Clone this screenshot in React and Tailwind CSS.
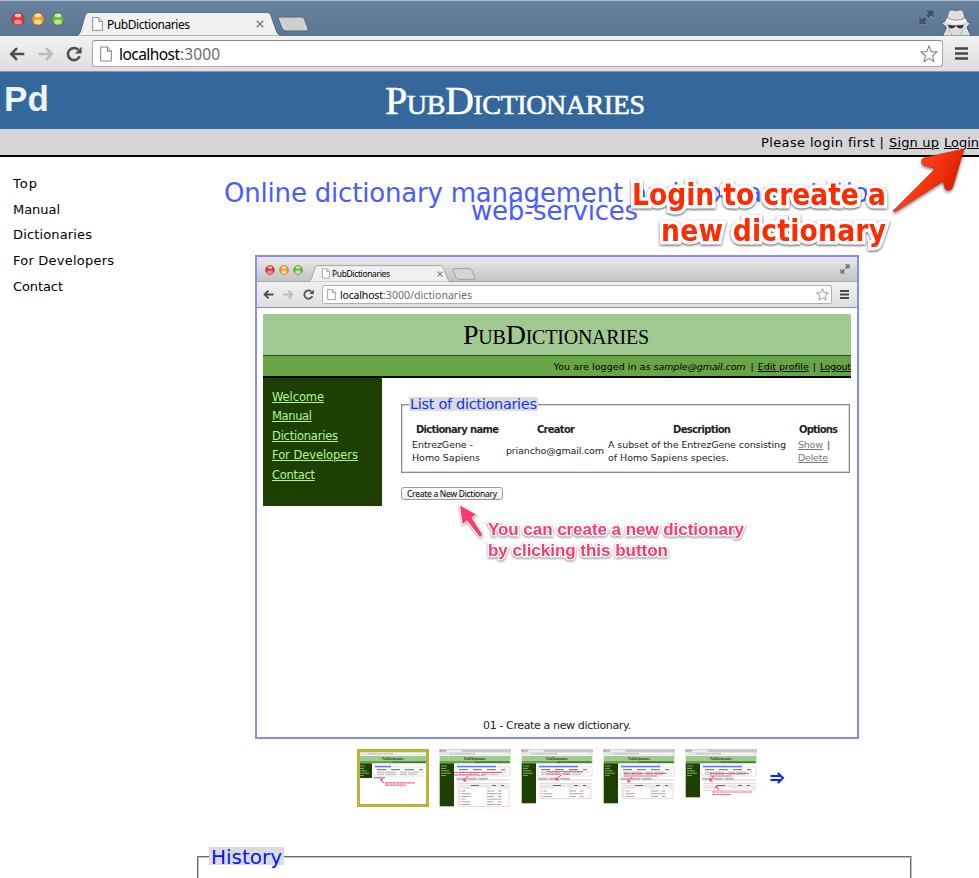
import { useLayoutEffect, useRef } from "react";

/* A single line of text tracked so that it fills exactly `w` pixels. */
function Fit({ w, className = "", children }) {
  const ref = useRef(null);
  useLayoutEffect(() => {
    const el = ref.current;
    el.style.width = "max-content";
    el.style.letterSpacing = "0px";
    const natural = el.getBoundingClientRect().width;
    const n = Math.max(1, String(children).length - 1);
    el.style.letterSpacing = (w - natural) / n + "px";
    el.style.width = w + "px";
  }, [w, children]);
  return (
    <span ref={ref} className={"inline-block whitespace-nowrap text-left " + className}>
      {children}
    </span>
  );
}

function Lights({ size, className }) {
  return (
    <div className={"flex " + className}>
      {[
        ["r", "#dc3a36", "#ff9d94", "#8e2a2a"],
        ["y", "#e8a12c", "#ffe49a", "#94661f"],
        ["g", "#6fb544", "#cdf5a5", "#437a2d"],
      ].map(([id, base, hi, edge]) => (
        <svg key={id} width={size} height={size} viewBox="0 0 13 13">
          <circle cx="6.5" cy="6.5" r="5.7" fill={base} stroke={edge} strokeWidth="0.7" />
          <ellipse cx="6.5" cy="9.3" rx="3.6" ry="2.4" fill={hi} opacity="0.8" />
          <ellipse cx="6.5" cy="3.2" rx="3" ry="1.7" fill="#fff" opacity="0.7" />
        </svg>
      ))}
    </div>
  );
}

const Doc = ({ w, h }) => (
  <svg width={w} height={h} viewBox="0 0 11 14" className="shrink-0">
    <path d="M.6.6H6.8L10.4 4.4V13.4H.6Z" fill="#fff" stroke="#8b8b8b" />
    <path d="M6.8.6V4.4H10.4" fill="#e8e8e8" stroke="#8b8b8b" />
  </svg>
);

const Arrow = ({ w, color, flip }) => (
  <svg width={w} height={w} viewBox="0 0 16 16" className={flip ? "-scale-x-100 shrink-0" : "shrink-0"}>
    <path d="M8 2.2 2.2 8 8 13.8M2.5 8H15.3" fill="none" stroke={color} strokeWidth="2.6" />
  </svg>
);

const Reload = ({ w }) => (
  <svg width={w} height={w} viewBox="0 0 16 16" className="shrink-0">
    <path d="M13.6 10.2A6 6 0 1 1 12.2 3.8" fill="none" stroke="#505050" strokeWidth="2.6" />
    <path d="M15.6.8V7.4H9Z" fill="#505050" />
  </svg>
);

const Star = ({ w }) => (
  <svg width={w} height={w} viewBox="0 0 18 18" className="shrink-0">
    <path d="M9 .9 11.2 6.6 17.2 6.9 12.5 10.7 14.1 16.8 9 13.4 3.9 16.8 5.5 10.7.8 6.9 6.8 6.6Z" fill="#fff" stroke="#858585" strokeWidth="1.1" strokeLinejoin="round" />
  </svg>
);

const Menu = ({ w, h }) => (
  <svg width={w} height={h} viewBox="0 0 13 13" preserveAspectRatio="none" className="shrink-0">
    <path d="M0 1.5H13M0 6.5H13M0 11.5H13" stroke="#474747" strokeWidth="2.7" />
  </svg>
);

const Cross = ({ w, className = "" }) => (
  <svg width={w} height={w} viewBox="0 0 8 8" className={className}>
    <path d="M.8.8 7.2 7.2M7.2.8.8 7.2" stroke="#808080" strokeWidth="1.5" />
  </svg>
);

const Expand = ({ w, color }) => (
  <svg width={w} height={w} viewBox="0 0 15 15" className="shrink-0">
    <path d="M7 .5H14.5V8L12 5.5 9.8 7.7 7.4 5.3 9.5 3Z" fill={color} />
    <path d="M8 14.5H.5V7L3 9.5 5.2 7.3 7.6 9.7 5.5 12Z" fill={color} />
    <path d="M8 15H.5M14.5 8.5 12 6" stroke="#fff" strokeWidth="0.6" opacity="0.6" />
  </svg>
);

const Incognito = () => (
  <svg width="32" height="27" viewBox="0 0 32 27">
    <path d="M7.5 7.5C8 3 9 1 11 .9 13 .7 14 1.6 16 1.5 18 1.4 19.5.5 21.5.9 23.5 1.4 24.3 5 24.7 8.5L27.5 13 30.6 13.8 27 18.2 31 27H2.6L6.5 18.4.8 13.6 5 12.6Z" fill="#dedede" stroke="#4b5868" strokeWidth="0.9" />
    <path d="M7.4 8.5C12 12.5 20 12.5 24.8 8.7L27.2 12.6C20 16.5 12 16 5.2 12.6Z" fill="#f4f4f4" />
    <path d="M8 8.2C12 11.6 20 11.8 24.3 8.4L24.6 9.3C20 12.3 12 12.1 7.6 9.1Z" fill="#666" />
    <path d="M7.5 15.5C11 16.8 20 16.9 24 15.6L22.300 19C19.5 20 17.5 19 16.7 17.5H15C14.3 19.300 11.500 20 9.200 18.800Z" fill="#333" />
    <path d="M8.500 19.500 12.500 26.500M23.500 19.500 20 26.500" stroke="#b0b0b0" fill="none" />
  </svg>
);

function MainChrome() {
  return (
    <header className="font-['Noto_Sans',sans-serif]">
      <div className="flex h-[36px] border-t border-[#a9bccd] bg-gradient-to-b from-[#67839f] to-[#5c7592]">
        <Lights size={14} className="gap-[6px] pt-[11px] pl-[11px]" />
        <div className="relative ml-[11px] flex h-[35px] w-[204px]">
          <svg className="absolute top-[10px] left-0" width="206" height="25" viewBox="0 0 206 25">
            <path d="M0 25C3 24 4 22 5 19L9 5C10 2 11 1.5 14 1.5H190C193 1.5 194 2 195 5L200 19C201 22 202 24 206 25Z" fill="#f0f0f0" stroke="#475c72" strokeWidth="0.8" />
          </svg>
          <div className="relative flex flex-1 items-start pt-[16px] pl-[16px]">
            <Doc w={11} h={14} />
            <Fit w={83} className="-mt-px ml-[4px] text-[12px] leading-[17px] text-black">PubDictionaries</Fit>
            <Cross w={8} className="mt-[3px] ml-[66px]" />
          </div>
        </div>
        <svg className="mt-[15px] -ml-[3px]" width="32" height="16" viewBox="0 0 32 16">
          <path d="M3.5 1H24C26 1 27 2 27.8 4L30.8 12C31.3 14 31 15 29 15H9.5C7.5 15 6 14 5 12L1.5 3.5C1 2 1.5 1 3.5 1Z" fill="#d0d0d0" stroke="#50667d" />
        </svg>
        <div className="ml-auto flex pr-[7px]">
          <div className="pt-[9px] pr-[6px]"><Expand w={15} color="#3f526a" /></div>
          <div className="pt-[8px]"><Incognito /></div>
        </div>
      </div>
      <div className="flex h-[36px] items-center border-b border-[#8b959c] bg-gradient-to-b from-[#f2f2f2] to-[#dedede]">
        <div className="ml-[9px]"><Arrow w={16} color="#4d4d4d" /></div>
        <div className="ml-[13px]"><Arrow w={16} color="#b9b9b9" flip /></div>
        <div className="ml-[12px]"><Reload w={16} /></div>
        <div className="ml-[10px] flex h-[27px] w-[851px] items-center rounded-[3px] border border-[#a8a8a8] border-t-[#8b8b8b] bg-white pr-[4px] pl-[7px]">
          <Doc w={12} h={16} />
          <Fit w={61} className="ml-[7px] text-[15.5px] leading-[20px] text-black">localhost</Fit>
          <Fit w={40} className="text-[15.5px] leading-[20px] text-[#6b6b6b]">:3000</Fit>
          <div className="ml-auto"><Star w={18} /></div>
        </div>
        <div className="ml-[12px]"><Menu w={13} h={13} /></div>
      </div>
    </header>
  );
}

function InnerChrome() {
  return (
    <div className="font-['Noto_Sans',sans-serif]">
      <div className="flex h-[25px] border-b border-[#a5a5a5] bg-gradient-to-b from-[#e9e9e9] to-[#c4c4c4]">
        <Lights size={10} className="gap-[4px] pt-[8px] pl-[8px]" />
        <div className="relative ml-[5px] flex w-[143px]">
          <svg className="absolute top-[8px] left-0" width="144" height="17" viewBox="0 0 144 17">
            <path d="M0 17C2 16.5 3 15 4 12L7 3C7.7 1 8.5.6 10 .6H132C134 .6 134.5 1 135.3 3L139 12C140 15 141 16.500 144 17Z" fill="#f0f0f0" stroke="#999" strokeWidth="0.8" />
          </svg>
          <div className="relative flex items-start pt-[11px] pl-[14px]">
            <Doc w={8} h={11} />
            <Fit w={58} className="ml-[2px] text-[8.5px] leading-[12px] text-black">PubDictionaries</Fit>
            <Cross w={6} className="mt-[3px] ml-[47px]" />
          </div>
        </div>
        <svg className="mt-[11px] ml-px" width="24" height="12" viewBox="0 0 24 12">
          <path d="M2.500.6H17C19 .6 19.500 1.500 20 2.500L22.500 9C23 10.500 22.500 11.300 21 11.300H7C5.500 11.300 4.500 10.500 4 9.500L1 2.500C.5 1.200 1.200.6 2.500.6Z" fill="#d6d6d6" stroke="#9b9b9b" strokeWidth="0.9" />
        </svg>
        <div className="ml-auto pt-[7px] pr-[7px]"><Expand w={10} color="#777" /></div>
      </div>
      <div className="flex h-[26px] items-center border-b border-[#8f8f8f] bg-gradient-to-b from-[#f1f1f1] to-[#dfdfdf]">
        <div className="ml-[6px]"><Arrow w={11} color="#4d4d4d" /></div>
        <div className="ml-[9px]"><Arrow w={11} color="#b9b9b9" flip /></div>
        <div className="ml-[9px]"><Reload w={11} /></div>
        <div className="ml-[8px] flex h-[19px] w-[510px] items-center rounded-[2px] border border-[#b0b0b0] bg-white pr-[2px] pl-[4px]">
          <Doc w={9} h={11} />
          <Fit w={43} className="ml-[4px] text-[10.5px] leading-[14px] text-black">localhost</Fit>
          <Fit w={89} className="text-[10.5px] leading-[14px] text-[#6b6b6b]">:3000/dictionaries</Fit>
          <div className="ml-auto"><Star w={13} /></div>
        </div>
        <div className="ml-[8px]"><Menu w={9} h={9} /></div>
      </div>
    </div>
  );
}

function InnerPage() {
  const nav = [["Welcome", 52], ["Manual", 40], ["Dictionaries", 66], ["For Developers", 86], ["Contact", 43]];
  return (
    <div className="mt-[6px] ml-[6px] w-[588px] text-[9.5px] text-[#222]">
      <div className="h-[42px] border-b border-[#2d4a1e] bg-[#a1ca92] pl-[200px] font-['Liberation_Serif',serif] text-[28px] leading-[42px] text-black [font-variant-caps:small-caps]">
        <Fit w={186}>PubDictionaries</Fit>
      </div>
      <div className="flex h-[22px] justify-end border-b-2 border-black bg-[#67a546] leading-[21px] text-black">
        <Fit w={97}>You are logged in as</Fit>
        <Fit w={92} className="ml-[3px] italic">sample@gmail.com</Fit>
        <span className="ml-[5px]">|</span>
        <Fit w={51} className="ml-[4px] underline">Edit profile</Fit>
        <span className="ml-[4px]">|</span>
        <Fit w={31} className="ml-[4px] underline">Logout</Fit>
      </div>
      <div className="flex">
        <nav className="flex h-[128px] w-[119px] flex-col bg-[#1d4002] pt-[10px] pl-[9px] text-[11.5px] text-[#b4f598]">
          {nav.map(([t, w]) => (
            <Fit key={t} w={w} className="h-[19.4px] leading-[19.4px] underline">{t}</Fit>
          ))}
        </nav>
        <div className="pt-[19px] pl-[19px]">
          <fieldset className="h-[76px] w-[449px] border-[1.5px] border-[#8b8b8b] shadow-[inset_0_0_0_0.5px_#b5b5b5]">
            <legend className="ml-[7px] h-[14px] bg-[#dcdcdc] px-px text-[14.5px] leading-[14px] text-[#0a35ff]">
              <Fit w={127}>List of dictionaries</Fit>
            </legend>
            <div className="flex pt-[12px] text-[10px] leading-[13px] font-bold">
              <Fit w={83} className="ml-[14px]">Dictionary name</Fit>
              <Fit w={38} className="ml-[38px]">Creator</Fit>
              <Fit w={58} className="ml-[98px]">Description</Fit>
              <Fit w={39} className="ml-[68px]">Options</Fit>
            </div>
            <div className="flex pt-[3px] leading-[12.8px]">
              <div className="ml-[10px] flex w-[94px] flex-col">
                <Fit w={61}>EntrezGene -</Fit>
                <Fit w={68}>Homo Sapiens</Fit>
              </div>
              <div className="flex w-[102px] items-center"><Fit w={98}>priancho@gmail.com</Fit></div>
              <div className="flex w-[190px] flex-col">
                <Fit w={178}>A subset of the EntrezGene consisting</Fit>
                <Fit w={121}>of Homo Sapiens species.</Fit>
              </div>
              <div className="text-[#777]">
                <div className="flex"><Fit w={25} className="underline">Show</Fit><span className="ml-[4px] text-[#333]">|</span></div>
                <Fit w={30} className="underline">Delete</Fit>
              </div>
            </div>
          </fieldset>
          <button className="mt-[14px] flex h-[13px] w-[102px] items-center justify-center rounded-[3px] border border-[#9b9b9b] bg-gradient-to-b from-white to-[#ececec] font-['Noto_Sans',sans-serif] text-[8.5px] leading-[11px] text-black">
            <Fit w={90}>Create a New Dictionary</Fit>
          </button>
        </div>
      </div>
    </div>
  );
}

function Slide() {
  return (
    <div className="relative flex h-[484px] w-[604px] flex-col border-2 border-[#868cff] bg-white">
      <InnerChrome />
      <InnerPage />
      <div className="mt-auto mb-[2px] flex pl-[226px] text-[11px] leading-[18px] text-[#222]">
        <Fit w={148}>01 - Create a new dictionary.</Fit>
      </div>
      <svg className="absolute top-[246px] left-[200px] drop-shadow-[0_1px_1px_#0006]" width="30" height="38" viewBox="0 0 30 38">
        <path d="M3 2.500 19 11.500 14.500 14.500 25.500 32 23 34 10 17.500 5.500 21Z" fill="#fb3b6e" stroke="#fff" strokeWidth="2" paintOrder="stroke" />
      </svg>
      <div className="absolute top-[263px] left-[231px] flex flex-col font-['Liberation_Sans',sans-serif] text-[17px] leading-[20.700px] font-bold text-[#fb3b6e] drop-shadow-[0_1px_1px_#0007] [-webkit-text-stroke:3px_white] [paint-order:stroke_fill]">
        <Fit w={256}>You can create a new dictionary</Fit>
        <Fit w={180}>by clicking this button</Fit>
      </div>
    </div>
  );
}

/* Miniature page preview; `rows` is the number of table rows it lists. */
function Thumb({ h, rows, side, selected, notes, arrow }) {
  return (
    <div className={selected ? "h-[58px] w-[72px] border-[3px] border-[#b9b535]" : "h-[58px] w-[72px]"}>
      <svg width={selected ? 66 : 72} height={selected ? 52 : 58} viewBox={selected ? "3 3 66 52" : "0 0 72 58"} className="block">
        <rect width="72" height={h} fill="#fff" />
        <rect width="72" height="3" fill="#c9c9c9" />
        <path d="M7 3 8 .8H22L23 3Z" fill="#eee" />
        <rect y="3" width="72" height="3.500" fill="#e4e4e4" />
        <rect x="8" y="3.600" width="61" height="2.200" fill="#fff" stroke="#bbb" strokeWidth=".3" />
        <path d="M10 4.800H36" stroke="#999" strokeWidth=".8" strokeDasharray="2 .4" />
        <circle cx="1.600" cy="1.700" r=".7" fill="#d55" />
        <circle cx="3.500" cy="1.700" r=".7" fill="#da5" />
        <circle cx="5.400" cy="1.700" r=".7" fill="#7b5" />
        <rect x=".7" y="7" width="70.600" height="5" fill="#a1ca92" />
        <text x="25" y="11.300" fontSize="4.200" textLength="22" fontFamily="Liberation Serif" fill="#111">PubDictionaries</text>
        <rect x=".7" y="12" width="70.600" height="2.300" fill="#67a546" />
        <path d="M36 13.200H70" stroke="#27451a" strokeWidth=".8" strokeDasharray="3 .6" />
        <rect x=".7" y="14.300" width="14.300" height={side} fill="#1d4002" />
        {[17, 19.400, 21.800, 24.200, 26.600].map((y, i) => (
          <path key={y} d={`M2 ${y}h${[6, 5, 8, 10, 5][i]}`} stroke="#86bc6c" strokeWidth=".9" />
        ))}
        <rect x="17" y="18" width="54" height="9" fill="none" stroke="#bbb" strokeWidth=".4" />
        <rect x="18" y="16.700" width={selected ? 16 : 39} height="1.600" fill="#3e5df5" opacity=".8" />
        <path d="M20 20.700H66" stroke="#555" strokeWidth=".9" strokeDasharray="9 5" />
        <path d="M20 23.200H67M20 25.200H60" stroke="#999" strokeWidth=".8" strokeDasharray="7 1 11 4" />
        {selected && <path d="M17 28.800h11" stroke="#888" strokeWidth="1.200" />}
        {!selected && (
          <g>
            <path d="M17 31V29H27V31M28 31V29H38V31M39 31V29H49V31M17 31H71" fill="none" stroke="#aaa" strokeWidth=".5" />
            <path d="M18 30H26M29 30H37M40 30H48" stroke="#666" strokeWidth=".7" />
            <rect x="19" y="34.500" width="51" height={7 + rows * 2.700} fill="none" stroke="#f6a5a5" strokeWidth=".5" />
            <rect x="20" y="35.500" width="49" height="4.500" fill="#e8e8e8" />
            <path d="M32 36.500H40M53 36.500H57M62 36.500H65" stroke="#555" strokeWidth=".9" />
            <path d="M32 39H47M52 39H60M61 39H66" stroke="#fff" strokeWidth="1.300" />
            {Array.from({ length: rows }, (_, i) => (
              <path key={i} d={`M20 ${42 + i * 2.700}h1.200M22.500 ${42 + i * 2.700}h${i % 3 ? 9 : 4}M48 ${42 + i * 2.700}h${i % 2 ? 10 : 7}M58.500 ${42 + i * 2.700}h4`} stroke="#888" strokeWidth=".75" />
            ))}
          </g>
        )}
        <path d={arrow} fill="none" stroke="#f2336c" strokeWidth="1" />
        {notes.map(([x, y, w]) => (
          <path key={y} d={`M${x} ${y}h${w}`} stroke="#f2336c" opacity=".8" strokeWidth="1.200" strokeDasharray="4 .5 2.500 .4" />
        ))}
      </svg>
    </div>
  );
}

function Thumbs() {
  return (
    <div className="mt-[10px] ml-[160px] flex items-start gap-[10px]">
      <Thumb selected h={57} side={14.700} rows={0} notes={[[28, 33.800, 30], [28, 36.200, 21]]} arrow="M27 34 24 30.500M24 32.500V30.300H26" />
      <Thumb h={58} side={43} rows={6} notes={[[15, 23.500, 49], [15, 26, 31]]} arrow="M29 27 25 32M25 29.500V32H27.500" />
      <Thumb h={55} side={40} rows={3} notes={[[26, 22.500, 36], [26, 25, 23]]} arrow="M40 26 35 31M35 28.500V31H37.500" />
      <Thumb h={55} side={40} rows={3} notes={[[21, 24.500, 43], [21, 27, 33]]} arrow="M29 28 25 33M25 30.500V33H27.500" />
      <Thumb h={49} side={34} rows={0} notes={[[25, 24.500, 39], [25, 27, 22], [27, 43, 40], [27, 45.500, 19]]} arrow="M29 27 25 32M25 29.500V32H27.500M34 41 31 37M31 39V37H33" />
      <svg width="15" height="12" viewBox="0 0 15 12" className="mt-[23px] ml-[3px]">
        <path d="M.5 4H10.800M.5 8H10.800M7.800 1 13 6 7.800 11" fill="none" stroke="#0a22ff" strokeWidth="2" />
      </svg>
    </div>
  );
}

export default function App() {
  const nav = [["Top", 24], ["Manual", 47], ["Dictionaries", 79], ["For Developers", 101], ["Contact", 50]];
  return (
    <div className="relative h-[878px] w-[979px] overflow-hidden bg-white font-['DejaVu_Sans',Verdana,sans-serif] text-[13px] text-black">
      <MainChrome />
      <div className="flex h-[57px] bg-[#34689c]">
        <div className="w-[385px] pt-[5px] pl-[4px] font-['Liberation_Sans',sans-serif] text-[35px] leading-[44px] font-bold text-[#f0f2f4]">
          <Fit w={45}>Pd</Fit>
        </div>
        <h1 className="font-['Liberation_Serif',serif] text-[40px] leading-[57px] text-white [-webkit-text-stroke:0.6px_white] [font-variant-caps:small-caps]">
          <Fit w={260}>PubDictionaries</Fit>
        </h1>
      </div>
      <div className="flex h-[28px] justify-end border-b-2 border-black bg-[#d5d5d5] leading-[27px]">
        <Fit w={123}>Please login first |</Fit>
        <Fit w={50} className="ml-[5px] underline">Sign up</Fit>
        <Fit w={35} className="ml-[5px] underline">Login</Fit>
      </div>
      <div className="flex">
        <nav className="flex w-[197px] flex-col pt-[14px] pl-[13px]">
          {nav.map(([t, w]) => (
            <Fit key={t} w={w} className="h-[25.700px] leading-[25.700px]">{t}</Fit>
          ))}
        </nav>
        <main className="w-[715px]">
          <h2 className="flex flex-col items-center pt-[27px] text-[26px] leading-[18px] text-[#4a5cff]">
            <Fit w={661}>Online dictionary management and text annotation</Fit>
            <Fit w={167}>web-services</Fit>
          </h2>
          <div className="mt-[35px] ml-[58px]"><Slide /></div>
          <Thumbs />
          <fieldset className="mt-[40px] h-[60px] border border-[#6c6c6c] border-r-[#bdbdbd] shadow-[inset_1px_1px_#bdbdbd,inset_-1px_0_#6c6c6c]">
            <legend className="ml-[11px] h-[18px] bg-[#dcdcdc] px-[2px] text-[20px] leading-[20px] text-[#0018ff]">
              <Fit w={71}>History</Fit>
            </legend>
          </fieldset>
        </main>
      </div>
      <div className="absolute top-[177px] right-[93px] flex flex-col items-end font-['DejaVu_Sans_Condensed','DejaVu_Sans',sans-serif] text-[29.500px] leading-[36px] font-bold text-[#ff2a00] drop-shadow-[0_1.500px_1px_#000a] [-webkit-text-stroke:7px_white] [paint-order:stroke_fill]">
        <Fit w={254}>Login to create a</Fit>
        <Fit w={225}>new dictionary</Fit>
      </div>
      <svg className="absolute top-[140px] left-[885px] drop-shadow-[0_2px_1.500px_#0007]" width="94" height="80" viewBox="0 0 94 80">
        <defs>
          <linearGradient id="red" x1="0" y1="0" x2="1" y2="0.500">
            <stop offset="0.500" stopColor="#ff3a16" />
            <stop offset="0.850" stopColor="#e02400" />
          </linearGradient>
        </defs>
        <path d="M79 9 40 17.500C36 18.500 35 23 39 25.500L48.500 28C49.500 28.500 49.500 29.500 48.500 30.500L8.500 70.500C8 71.500 9 72.300 10.500 71.500L56 42.500C57.500 41.700 58.500 42.200 58.800 43.500L59.500 47.500C61 51.500 66.500 51 68 46.500Z" fill="url(#red)" stroke="#b83018" strokeWidth="0.600" />
      </svg>
    </div>
  );
}
